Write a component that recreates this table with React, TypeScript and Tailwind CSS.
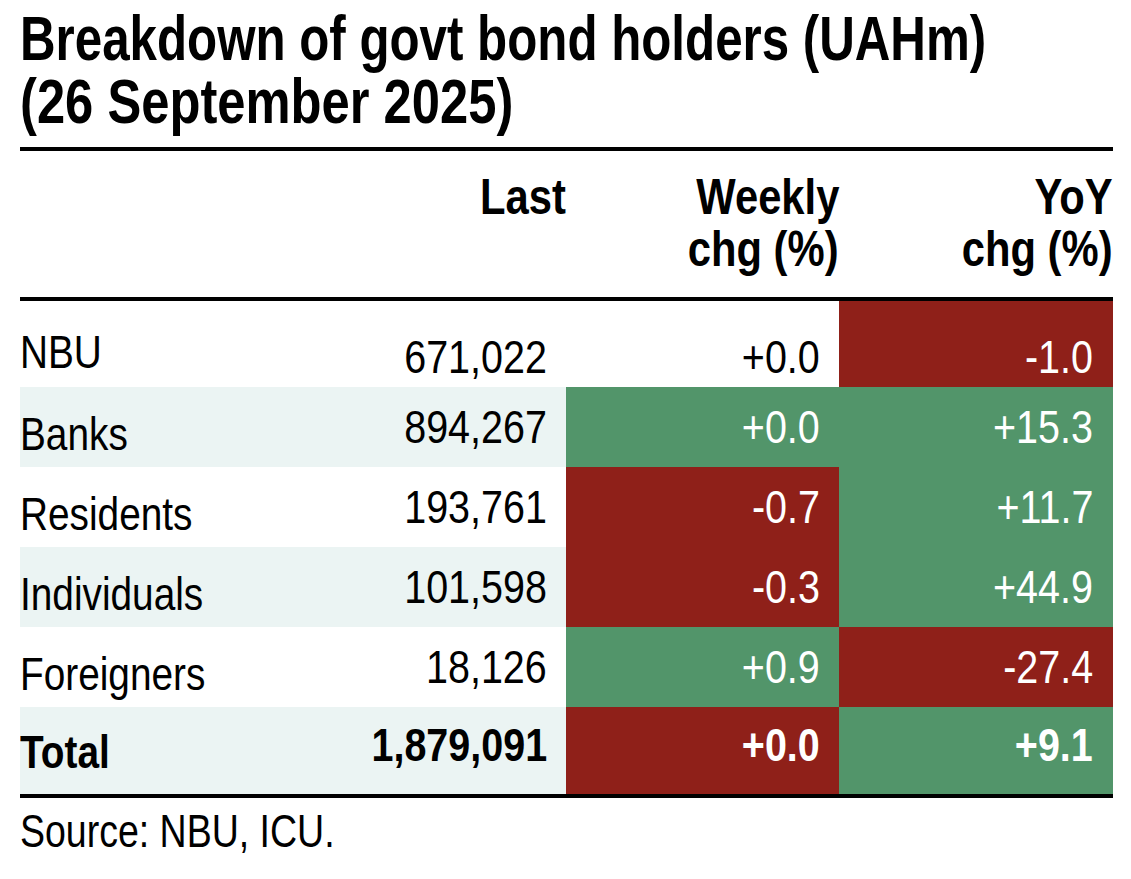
import React from "react";

type Tone = "red" | "green" | "none";
type Row = {
  label: string;
  last: string;
  weekly: string;
  wTone: Tone;
  yoy: string;
  yTone: Tone;
  band: boolean;
  bold?: boolean;
};

const rows: Row[] = [
  { label: "NBU", last: "671,022", weekly: "+0.0", wTone: "none", yoy: "-1.0", yTone: "red", band: false },
  { label: "Banks", last: "894,267", weekly: "+0.0", wTone: "green", yoy: "+15.3", yTone: "green", band: true },
  { label: "Residents", last: "193,761", weekly: "-0.7", wTone: "red", yoy: "+11.7", yTone: "green", band: false },
  { label: "Individuals", last: "101,598", weekly: "-0.3", wTone: "red", yoy: "+44.9", yTone: "green", band: true },
  { label: "Foreigners", last: "18,126", weekly: "+0.9", wTone: "green", yoy: "-27.4", yTone: "red", band: false },
  { label: "Total", last: "1,879,091", weekly: "+0.0", wTone: "red", yoy: "+9.1", yTone: "green", band: true, bold: true },
];

function toneClass(t: Tone) {
  if (t === "red") return "bg-[#8f2019] text-white";
  if (t === "green") return "bg-[#52956a] text-white";
  return "bg-white text-black";
}

function R({ children }: { children: React.ReactNode }) {
  return <span className="inline-block whitespace-nowrap origin-right scale-x-[0.84]">{children}</span>;
}

function L({ children }: { children: React.ReactNode }) {
  return <span className="inline-block whitespace-nowrap origin-left scale-x-[0.825]">{children}</span>;
}

function H({ children }: { children: React.ReactNode }) {
  return <span className="inline-block whitespace-nowrap origin-right scale-x-[0.835]">{children}</span>;
}

export default function App() {
  return (
    <div
      className="w-[1131px] h-[879px] overflow-hidden bg-white text-black pl-[20px] pt-[7px]"
      style={{ fontFamily: '"Liberation Sans", Arial, sans-serif' }}
    >
      <div className="w-[1093px]">
        <h1 className="text-[63px] leading-[63px] font-bold">
          <span className="inline-block whitespace-nowrap origin-left scale-x-[0.782]">
            Breakdown of govt bond holders (UAHm)
          </span>
          <br />
          <span className="inline-block whitespace-nowrap origin-left scale-x-[0.805]">(26 September 2025)</span>
        </h1>
        <div className="mt-[14px] h-[4px] bg-black" />
        <div className="grid grid-cols-[280px_266px_273px_274px] pt-[20px] pb-[22px] text-[50px] leading-[52px] font-bold">
          <div />
          <div className="text-right">
            <H>Last</H>
          </div>
          <div className="text-right">
            <H>Weekly</H>
            <br />
            <H>chg (%)</H>
          </div>
          <div className="text-right">
            <H>YoY</H>
            <br />
            <H>chg (%)</H>
          </div>
        </div>
        <div className="h-[4px] bg-black" />
        <div className="flex flex-col">
          {rows.map((r, i) => {
            const first = i === 0;
            const total = !!r.bold;
            const h = first ? "h-[86px]" : total ? "h-[87px]" : "h-[80px]";
            const numPad = first ? "pt-[26px]" : total ? "pb-[11px]" : "";
            const labelPad = first ? "pt-[16px]" : total ? "pt-[3px]" : "pt-[14px]";
            const band = r.band ? "bg-[#ebf4f3]" : "bg-white";
            const weight = r.bold ? "font-bold" : "font-normal";
            return (
              <div
                key={r.label}
                className={`grid grid-cols-[280px_266px_273px_274px] ${h} text-[47px] leading-[50px] ${weight}`}
              >
                <div className={`${band} flex items-center ${labelPad}`}>
                  <L>{r.label}</L>
                </div>
                <div className={`${band} flex items-center justify-end pr-[19px] ${numPad}`}>
                  <R>{r.last}</R>
                </div>
                <div className={`${toneClass(r.wTone)} flex items-center justify-end pr-[19px] ${numPad}`}>
                  <R>{r.weekly}</R>
                </div>
                <div className={`${toneClass(r.yTone)} flex items-center justify-end pr-[20px] ${numPad}`}>
                  <R>{r.yoy}</R>
                </div>
              </div>
            );
          })}
        </div>
        <div className="h-[4px] bg-black" />
        <div className="mt-[8px] text-[46px] leading-[50px] font-normal">
          <span className="inline-block whitespace-nowrap origin-left scale-x-[0.815]">Source: NBU, ICU.</span>
        </div>
      </div>
    </div>
  );
}
